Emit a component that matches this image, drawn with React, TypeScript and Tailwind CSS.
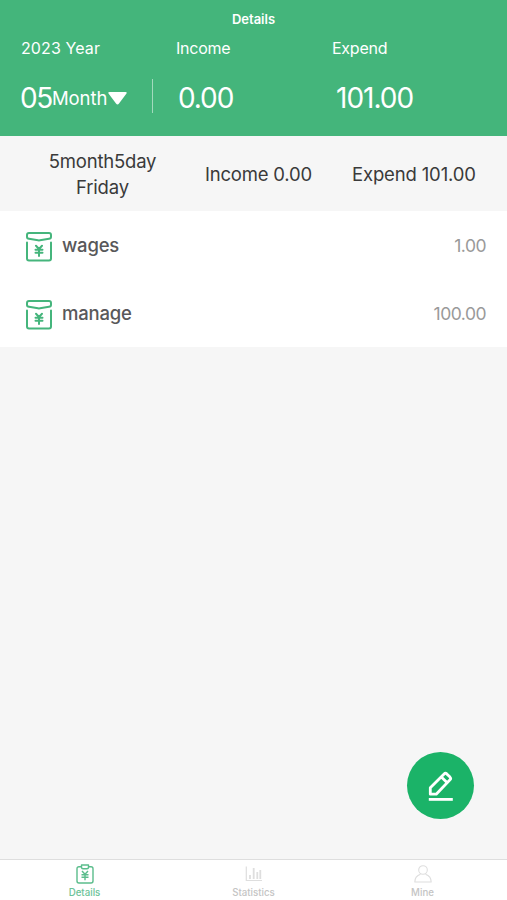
import React from "react";

const records = [
  { name: "wages", amount: "1.00" },
  { name: "manage", amount: "100.00" },
];

const EnvelopeIcon = () => (
  <svg
    className="w-[28px] h-[32px] mt-[3px] shrink-0"
    viewBox="0 0 28 32"
    fill="none"
    stroke="#45b57c"
    strokeWidth="2"
    strokeLinecap="round"
    strokeLinejoin="round"
  >
    <path d="M4 2H24Q26 2 26 4V6Q26 7.5 24 7.8L15 9.3Q14 9.5 13 9.3L4 7.8Q2 7.5 2 6V4Q2 2 4 2Z" />
    <path d="M2 11.5V27.5Q2 29.5 4 29.5H24Q26 29.5 26 27.5V11.5" />
    <path d="M11 14.8L14 18L17 14.8M10.5 18.7H17.5M10.5 21.7H17.5M14 18V25" />
  </svg>
);

const DetailsIcon = () => (
  <svg
    className="w-[18px] h-5"
    viewBox="0 0 18 20"
    fill="none"
    stroke="#5bbd8c"
    strokeWidth="1.4"
    strokeLinejoin="round"
  >
    <path d="M5.5 2.8H3Q1 2.8 1 4.8V17Q1 19 3 19H15Q17 19 17 17V4.8Q17 2.8 15 2.8H12.5" />
    <path d="M5.5 1H12.5V3.2Q12.5 4.7 11 4.7H7Q5.5 4.7 5.5 3.2Z" />
    <path d="M6 7L9 10.3L12 7M5.5 10.7H12.5M5.5 13.2H12.5M9 10.3V16.2" />
  </svg>
);

const StatisticsIcon = () => (
  <svg
    className="w-[18px] h-5"
    viewBox="0 0 18 20"
    fill="none"
    stroke="#dedede"
    strokeWidth="1.2"
  >
    <path d="M1.3 2.5V16.5H17" />
    <path d="M5 11V15M8.7 4V15M12.3 8V15M15.3 6V15" strokeWidth="1.8" />
  </svg>
);

const MineIcon = () => (
  <svg
    className="w-[18px] h-5"
    viewBox="0 0 18 20"
    fill="none"
    stroke="#dedede"
    strokeWidth="1.1"
    strokeLinejoin="round"
  >
    <circle cx="9" cy="6" r="4.3" />
    <path d="M6.5 10.3C3 11.5 .8 14 .8 18H17.2C17.2 14 15 11.5 11.5 10.3" />
  </svg>
);

const tabs = [
  { label: "Details", icon: <DetailsIcon />, color: "text-[#6cc398]" },
  { label: "Statistics", icon: <StatisticsIcon />, color: "text-[#c4c4c4]" },
  { label: "Mine", icon: <MineIcon />, color: "text-[#c4c4c4]" },
];

const Header = () => (
  <header className="h-[136px] bg-[#44b57b] text-white">
    <h1 className="pt-[10px] text-center text-[13px] leading-[18px] font-semibold">
      Details
    </h1>
    <div className="flex pl-[21px] pt-[10px] text-base leading-5">
      <span className="w-[155px] tracking-[0.1px]">2023 Year</span>
      <span className="w-[156px] tracking-[-0.25px]">Income</span>
      <span className="tracking-[-0.25px]">Expend</span>
    </div>
    <div className="flex h-[34px] mt-[21px] pl-5 items-center text-[28px]">
      <div className="flex w-[133px] h-full items-center border-r border-white/50">
        <span className="w-8 pt-1 tracking-[-1.4px]">05</span>
        <span className="w-[56px] pt-[5px] text-[18.5px] tracking-[-0.1px]">
          Month
        </span>
        <svg className="w-[19px] h-[13px] mt-1" viewBox="0 0 19 13" fill="white">
          <path d="M1.5 0H17.5Q19.5 0 18.3 1.8L11 11.5Q9.5 13.4 8 11.5L.7 1.8Q-.5 0 1.5 0Z" />
        </svg>
      </div>
      <span className="w-[157px] pt-1 pl-[25px] tracking-[-1.1px]">0.00</span>
      <span className="pt-1 pl-[26px] tracking-[-1px]">101.00</span>
    </div>
  </header>
);

const App = () => {
  return (
    <div className="relative flex flex-col w-full h-[900px] bg-[#f6f6f6] font-[Inter,sans-serif]">
      <Header />
      <div className="flex h-[75px] items-center text-[18.5px] text-[#3a3a3a] tracking-[-0.2px]">
        <div className="w-[205px] text-center leading-[26px]">
          5month5day
          <br />
          Friday
        </div>
        <span className="w-[147px] pt-[3px]">Income 0.00</span>
        <span className="pt-[3px] tracking-[-0.15px]">Expend 101.00</span>
      </div>
      <ul className="bg-white h-[136px] text-[#58585a]">
        {records.map((item) => (
          <li
            className="flex h-[68px] items-center pl-[25px] pr-[21px]"
            key={item.name}
          >
            <EnvelopeIcon />
            <span className="ml-[9px] pt-[2px] text-[18.5px] font-medium tracking-[-0.2px]">
              {item.name}
            </span>
            <span className="ml-auto pt-[2px] text-[17.5px] text-[#999] tracking-[-0.5px]">
              {item.amount}
            </span>
          </li>
        ))}
      </ul>
      <button className="absolute left-[407px] top-[752px] flex size-[67px] items-center justify-center rounded-full bg-[#1bb368]">
        <svg
          className="size-[30px]"
          viewBox="0 0 30 30"
          fill="none"
          stroke="white"
          strokeWidth="2.8"
          strokeLinejoin="round"
        >
          <path d="M4.3 23.2V16.8L18.1 2.9Q19.4 1.6 20.8 2.9L24 6.1Q25.3 7.5 24 8.8L10.2 23.2ZM15.3 5.9L21 11.6" />
          <path d="M2.8 28.4H26.8" />
        </svg>
      </button>
      <nav className="flex mt-auto h-[41px] bg-white border-t border-[#dedede]">
        {tabs.map((tab) => (
          <a
            className="flex flex-1 flex-col items-center pt-[4px]"
            key={tab.label}
          >
            {tab.icon}
            <span
              className={`mt-[3px] text-[9.7px] leading-3 font-medium ${tab.color}`}
            >
              {tab.label}
            </span>
          </a>
        ))}
      </nav>
    </div>
  );
};

export default App;
